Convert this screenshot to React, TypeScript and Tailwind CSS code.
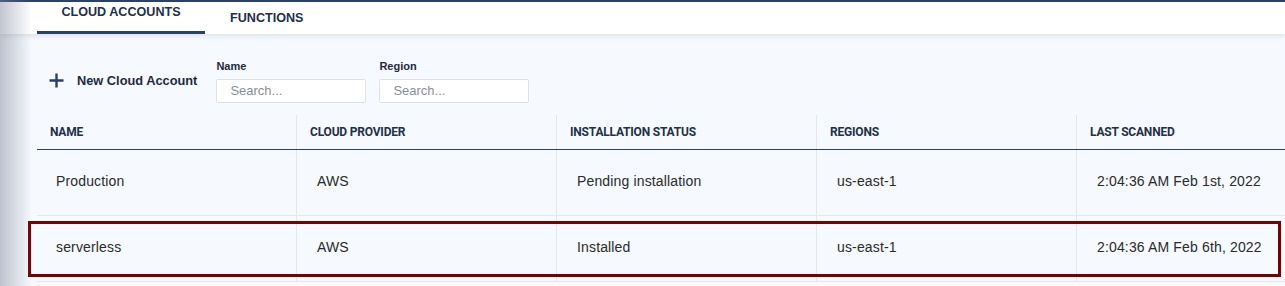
const columns = ['NAME', 'CLOUD PROVIDER', 'INSTALLATION STATUS', 'REGIONS', 'LAST SCANNED'];

const rows = [
    { name: 'Production', provider: 'AWS', status: 'Pending installation', region: 'us-east-1', scanned: '2:04:36 AM Feb 1st, 2022' },
    { name: 'serverless', provider: 'AWS', status: 'Installed', region: 'us-east-1', scanned: '2:04:36 AM Feb 6th, 2022', marked: true },
];

const SearchField = ({ label }: { label: string }) => (
    <div className="flex flex-col">
        <label className="text-[11px] leading-[14px] font-bold text-[#1f2a3d]">{label}</label>
        <input
            placeholder="Search..."
            className="mt-[6px] w-[150px] h-[24px] bg-white border border-[#dde2e9] rounded-[2px] px-[13px] text-[13px] text-[#333] placeholder:text-[#8a8f98] outline-none"
        />
    </div>
);

export default function App() {
    return (
        <div className="relative w-[1285px] h-[286px] overflow-hidden bg-[#f6f9fd] font-['Liberation_Sans',Arial,sans-serif]">
            {/* Tabs */}
            <div className="relative z-10 border-t-2 border-[#2c4166] bg-white shadow-[0_2px_5px_rgba(40,60,90,0.12)]">
                <div className="flex pl-[37px] h-[32px]">
                    <div className="w-[168px] flex justify-center pt-[3px] border-b-[3px] border-[#2c4166]">
                        <span className="text-[12.6px] leading-[15px] font-bold text-[#22304a]">CLOUD ACCOUNTS</span>
                    </div>
                    <div className="px-[25px] pt-[3px]">
                        <span className="text-[12.6px] leading-[15px] font-bold text-[#22304a]">FUNCTIONS</span>
                    </div>
                </div>
            </div>

            <div className="pl-[37px]">
                {/* Toolbar */}
                <div className="flex items-center h-[81px] pt-[24px] pb-[12px]">
                    <button className="flex items-center pl-[12px] mr-[19px] text-[#1f2a3d]">
                        <svg width="15" height="15" viewBox="0 0 15 15" fill="none" stroke="#2c4166" strokeWidth="2.4">
                            <path d="M7.5 0.5v14M0.5 7.5h14" />
                        </svg>
                        <span className="ml-[13px] text-[12.8px] font-bold">New Cloud Account</span>
                    </button>
                    <div className="flex gap-[13px]">
                        <SearchField label="Name" />
                        <SearchField label="Region" />
                    </div>
                </div>

                {/* Table */}
                <div className="grid grid-cols-[259px_260px_260px_260px_260px] border-b border-[#2c4166]">
                    {columns.map((c, i) => (
                        <div
                            key={c}
                            className={`h-[34px] flex items-center pl-[13px] font-['Roboto',sans-serif] text-[12px] tracking-[-0.2px] font-bold text-[#22304a] ${i > 0 ? 'border-l border-[#e4e8ee]' : ''}`}
                        >
                            {c}
                        </div>
                    ))}
                </div>
                {rows.map((r) => (
                    <div key={r.name} className="relative grid grid-cols-[259px_260px_260px_260px_260px] h-[66px] border-b border-[#e4e8ee] text-[14px] tracking-[0.15px] text-[#2b2b2b]">
                        {[r.name, r.provider, r.status, r.region, r.scanned].map((v, i) => (
                            <div key={i} className={`flex items-center pb-[2px] ${i > 0 ? 'border-l border-[#e4e8ee] pl-[20px]' : 'pl-[19px]'}`}>
                                {v}
                            </div>
                        ))}
                        {r.marked && (
                            <div className="absolute -left-[9px] top-[5px] w-[1253px] h-[56px] border-[3px] border-[#7a0000] pointer-events-none" />
                        )}
                    </div>
                ))}
            </div>

            {/* left edge shade */}
            <div className="absolute inset-y-0 left-0 w-[32px] z-20 pointer-events-none bg-gradient-to-r from-[rgba(120,128,150,0.45)] to-transparent" />
        </div>
    );
}
